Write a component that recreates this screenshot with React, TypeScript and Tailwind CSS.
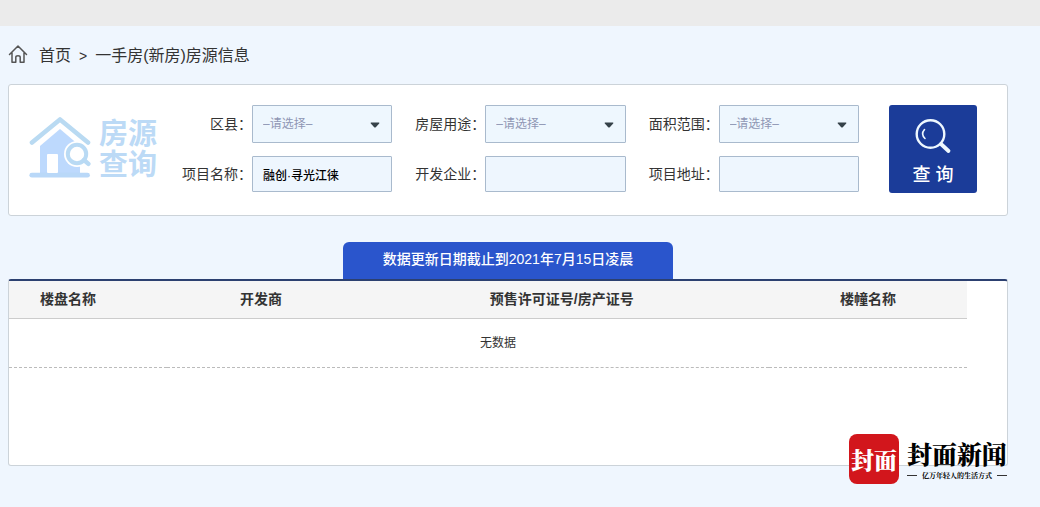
const usageOptions = ["住宅", "商业", "办公"];
const districtOptions = ["渝中区", "江北区", "渝北区"];
const areaOptions = ["90以下", "90-144", "144以上"];

const SelectField = ({ id, label, options }: { id: string; label: string; options: string[] }) => {
    return (
        <div className="flex items-center">
            <label htmlFor={id} className="w-[71px] shrink-0 text-right text-sm whitespace-nowrap">{label}：</label>
            <div className="relative flex-1">
                <select id={id} className="block w-full h-[38px] pl-2.5 appearance-none border border-[#a9bacd] rounded-[1px] bg-[#eef7fe] text-xs text-[#8f96b4]">
                    <option value="">–请选择–</option>
                    {options.map((option) => (
                        <option key={option}>{option}</option>
                    ))}
                </select>
                <svg className="absolute right-3 top-4 w-2.5 h-2 pointer-events-none" viewBox="0 0 10 8">
                    <path d="M0.6 2.2Q0.4 1.4 1.2 1.4H8.8Q9.6 1.4 9.4 2.2L5.8 6.2Q5 6.9 4.2 6.2Z" fill="#354249" />
                </svg>
            </div>
        </div>
    );
};

const TextField = ({ id, label, value }: { id: string; label: string; value?: string }) => {
    return (
        <div className="flex items-center">
            <label htmlFor={id} className="w-[71px] shrink-0 text-right text-sm whitespace-nowrap">{label}：</label>
            <input id={id} type="text" defaultValue={value} className="flex-1 min-w-0 h-9 px-2.5 border border-[#a9bacd] rounded-[1px] bg-[#eef6fe] text-xs font-medium text-black" />
        </div>
    );
};

const SearchLogo = () => {
    return (
        <div className="flex items-center gap-2 text-[#bcdaf6]">
            <svg className="w-[62px] h-[62px]" viewBox="0 0 62 62" fill="none">
                <path d="M11 29L31 12L51 29V56H11Z" fill="#bdd9fd" />
                <path d="M3 25.5L31 2.5L59 25.5" stroke="#b9daf2" strokeWidth="4.6" strokeLinecap="round" strokeLinejoin="round" />
                <path d="M2.8 58.2H58.5" stroke="#b9d8f8" strokeWidth="4.8" strokeLinecap="round" />
                <rect x="18" y="37" width="11" height="19" rx="1" fill="#fff" />
                <circle cx="48" cy="37" r="13" fill="#fff" />
                <path d="M53 42L58 46" stroke="#fff" strokeWidth="9" strokeLinecap="round" />
                <circle cx="48" cy="37" r="9.2" stroke="#b9daf4" strokeWidth="4" />
                <path d="M55 43L59.4 46.8" stroke="#b9daf4" strokeWidth="4.4" strokeLinecap="round" />
            </svg>
            <div className="pt-1 text-[29px] leading-[31px] font-bold whitespace-nowrap">
                <p>房源</p>
                <p>查询</p>
            </div>
        </div>
    );
};

const NewsMark = () => {
    return (
        <div className="absolute right-0 -bottom-[19px] flex items-center gap-2 font-['Noto_Serif_CJK_SC','Noto_Sans_CJK_SC',serif] text-black whitespace-nowrap">
            <div className="w-[50px] h-[50px] rounded-lg bg-[#d2161c] flex items-center justify-center text-[23px] leading-none font-black text-white">封面</div>
            <div>
                <p className="text-[25px] leading-8 font-black">封面新闻</p>
                <div className="flex items-center justify-between text-[7px] leading-3 font-bold">
                    <span className="w-2.5 h-px bg-[#333]" />
                    <span>亿万年轻人的生活方式</span>
                    <span className="w-2.5 h-px bg-[#333]" />
                </div>
            </div>
        </div>
    );
};

const App = () => {
    return (
        <div className="min-h-screen bg-[#eff6fe] text-[#333] font-['Liberation_Sans','Noto_Sans_CJK_SC',sans-serif]">
            <div className="h-[26px] bg-[#ebebeb]" />
            <main className="pl-2 pr-8">
                <nav className="h-[58px] pt-0.5 flex items-center text-base">
                    <svg className="w-5 h-5 mr-[11px] mb-1" viewBox="0 0 20 20" fill="none" stroke="#555" strokeWidth="1.5" strokeLinecap="round" strokeLinejoin="round">
                        <path d="M1.5 10.5L10 2L18.5 10.5M4 9V18.2H7.8V13.2Q7.8 11.8 10 11.8Q12.2 11.8 12.2 13.2V18.2H16V9" />
                    </svg>
                    <a href="#">首页</a>
                    <span className="mx-2 text-sm">&gt;</span>
                    <span>一手房(新房)房源信息</span>
                </nav>

                <form className="flex items-start border border-[#ccd3d9] rounded-[3px] bg-white pl-5 pr-[30px] pt-5 pb-[22px]">
                    <div className="pt-2.5">
                        <SearchLogo />
                    </div>
                    <div className="flex-1 grid grid-cols-3 gap-x-[22px] gap-y-[13px] ml-6 mr-[30px]">
                        <SelectField id="district" label="区县" options={districtOptions} />
                        <SelectField id="usage" label="房屋用途" options={usageOptions} />
                        <SelectField id="area" label="面积范围" options={areaOptions} />
                        <TextField id="project" label="项目名称" value="融创·寻光江徕" />
                        <TextField id="company" label="开发企业" />
                        <TextField id="address" label="项目地址" />
                    </div>
                    <button type="button" className="w-[88px] h-[88px] shrink-0 rounded-[3px] bg-[#1b3c99] text-white flex flex-col items-center pt-3">
                        <svg className="w-10 h-10" viewBox="0 0 40 40" fill="none" stroke="#eef8ff" strokeLinecap="round">
                            <circle cx="17.5" cy="17" r="13.8" strokeWidth="2.4" />
                            <path d="M11.5 12.5Q7.5 17 12 21.5" strokeWidth="1.6" />
                            <path d="M28 27L35.5 34" strokeWidth="3.8" />
                        </svg>
                        <span className="text-lg leading-9 font-medium">查 询</span>
                    </button>
                </form>

                <div className="flex justify-center mt-[26px]">
                    <h2 className="h-[37px] px-10 rounded-t-md bg-[#2a55cc] text-sm leading-[34px] font-medium text-white">数据更新日期截止到2021年7月15日凌晨</h2>
                </div>
                <section className="relative min-h-[187px] border border-[#ccd3d9] border-t-2 border-t-[#2c4070] rounded-[3px] bg-white">
                    <table className="w-[96%] table-fixed text-sm">
                        <thead>
                            <tr className="h-[37px] bg-[#f5f5f5] border-b border-[#ccc]">
                                <th className="w-[16.5%] pr-10 font-bold">楼盘名称</th>
                                <th className="w-[19.6%] font-bold">开发商</th>
                                <th className="w-[43.2%] font-bold">预售许可证号/房产证号</th>
                                <th className="font-bold">楼幢名称</th>
                            </tr>
                        </thead>
                        <tbody>
                            <tr className="h-[49px] border-b border-dashed border-[#bbb]">
                                <td colSpan={4} className="pl-5 text-xs text-center">无数据</td>
                            </tr>
                        </tbody>
                    </table>
                    <NewsMark />
                </section>
            </main>
        </div>
    );
};

export default App;
